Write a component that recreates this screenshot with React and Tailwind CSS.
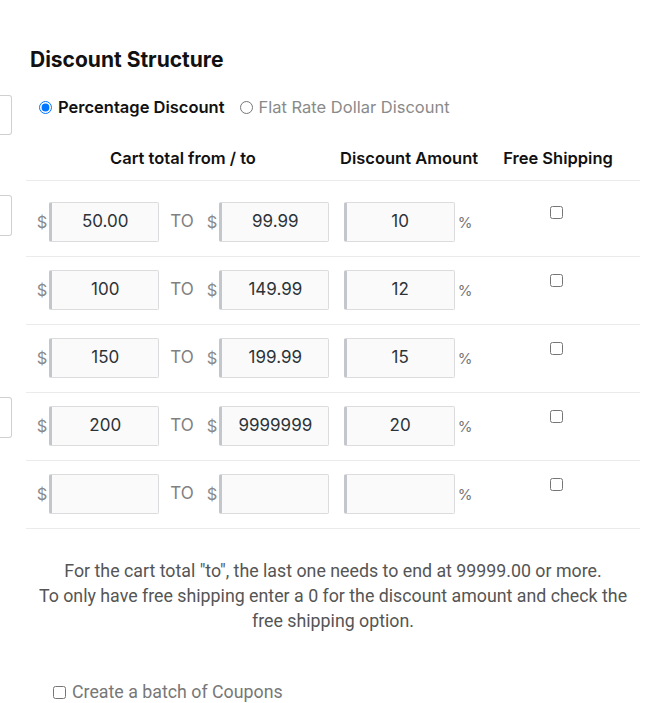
import React from "react";

const rows = [
  { from: "50.00", to: "99.99", amt: "10" },
  { from: "100", to: "149.99", amt: "12" },
  { from: "150", to: "199.99", amt: "15" },
  { from: "200", to: "9999999", amt: "20" },
  { from: "", to: "", amt: "" },
];

function Field({ value, w = "w-[110px]" }) {
  return (
    <div
      className={`${w} h-[40px] flex items-center justify-center bg-[#fafafa] border border-[#dcdcde] border-l-[3px] border-l-[#c3c7cb] rounded-[2px] text-[17px] text-[#2c3338]`}
    >
      {value}
    </div>
  );
}

export default function App() {
  return (
    <div
      className="w-[670px] h-[703px] overflow-hidden bg-white flex"
      style={{ fontFamily: "Inter, 'Noto Sans', sans-serif" }}
    >
      {/* cut-off left column */}
      <div className="w-[12px] shrink-0 flex flex-col">
        <div className="shrink-0 mt-[95px] h-[40px] border border-l-0 border-[#d0d0d0] rounded-r-[3px]" />
        <div className="shrink-0 mt-[60px] h-[41px] border border-l-0 border-[#d0d0d0] rounded-r-[3px]" />
        <div className="shrink-0 mt-[161px] h-[41px] border border-l-0 border-[#d0d0d0] rounded-r-[3px]" />
      </div>

      <div className="ml-[14px] w-[614px] flex flex-col">
        <h2 className="shrink-0 mt-[47px] ml-[4px] text-[21px] leading-[26px] font-bold text-[#111]">
          Discount Structure
        </h2>

        <div className="shrink-0 mt-[23px] ml-[13px] flex items-center h-[22px] text-[16.5px]">
          <input type="radio" name="dt" defaultChecked className="m-0 w-[13px] h-[13px]" />
          <span className="ml-[6px] font-semibold text-[#111]">Percentage Discount</span>
          <input type="radio" name="dt" className="m-0 ml-[15px] w-[13px] h-[13px]" />
          <span className="ml-[6px] text-[#8a8a8a]">Flat Rate Dollar Discount</span>
        </div>

        <div className="shrink-0 mt-[30px] grid grid-cols-[314px_136px_164px] h-[33px] border-b border-[#ebebeb] text-[16.5px] font-semibold text-[#111] whitespace-nowrap">
          <div className="text-center leading-[20px]">Cart total from / to</div>
          <div className="text-center leading-[20px]">Discount Amount</div>
          <div className="text-center leading-[20px]">Free Shipping</div>
        </div>

        {rows.map((r, i) => (
          <div
            key={i}
            className={`shrink-0 grid grid-cols-[314px_136px_164px] border-b border-[#ebebeb] ${
              i === 0 ? "pt-[21px]" : "pt-[13px]"
            } pb-[14px]`}
          >
            <div className="flex items-center justify-center text-[#777]">
              <span className="text-[16.5px] text-[#8a8a8a] mr-[2px]">$</span>
              <Field value={r.from} />
              <span className="ml-[11px] text-[17px] text-[#808080]">TO</span>
              <span className="ml-[13px] text-[16.5px] text-[#8a8a8a] mr-[2px]">$</span>
              <Field value={r.to} />
            </div>
            <div className="flex items-center justify-center">
              <Field value={r.amt} w="w-[111px]" />
              <span className="ml-[3px] mt-[2px] text-[15px] text-[#777]">%</span>
            </div>
            <div className="flex justify-center items-start">
              <input type="checkbox" className="m-0 mt-[4px] mr-[4px] w-[13px] h-[13px]" />
            </div>
          </div>
        ))}

        <div
          className="shrink-0 mt-[29px] text-center text-[17.8px] leading-[25px] text-[#555]"
          style={{ fontFamily: "Roboto, 'Noto Sans', sans-serif" }}
        >
          <p>For the cart total "to", the last one needs to end at 99999.00 or more.</p>
          <p>
            To only have free shipping enter a 0 for the discount amount and check the
            free shipping option.
          </p>
        </div>

        <label
          className="shrink-0 mt-[46px] ml-[27px] flex items-center text-[17.8px] text-[#777]"
          style={{ fontFamily: "Roboto, 'Noto Sans', sans-serif" }}
        >
          <input type="checkbox" className="m-0 w-[13px] h-[13px]" />
          <span className="ml-[6px]">Create a batch of Coupons</span>
        </label>
      </div>
    </div>
  );
}
